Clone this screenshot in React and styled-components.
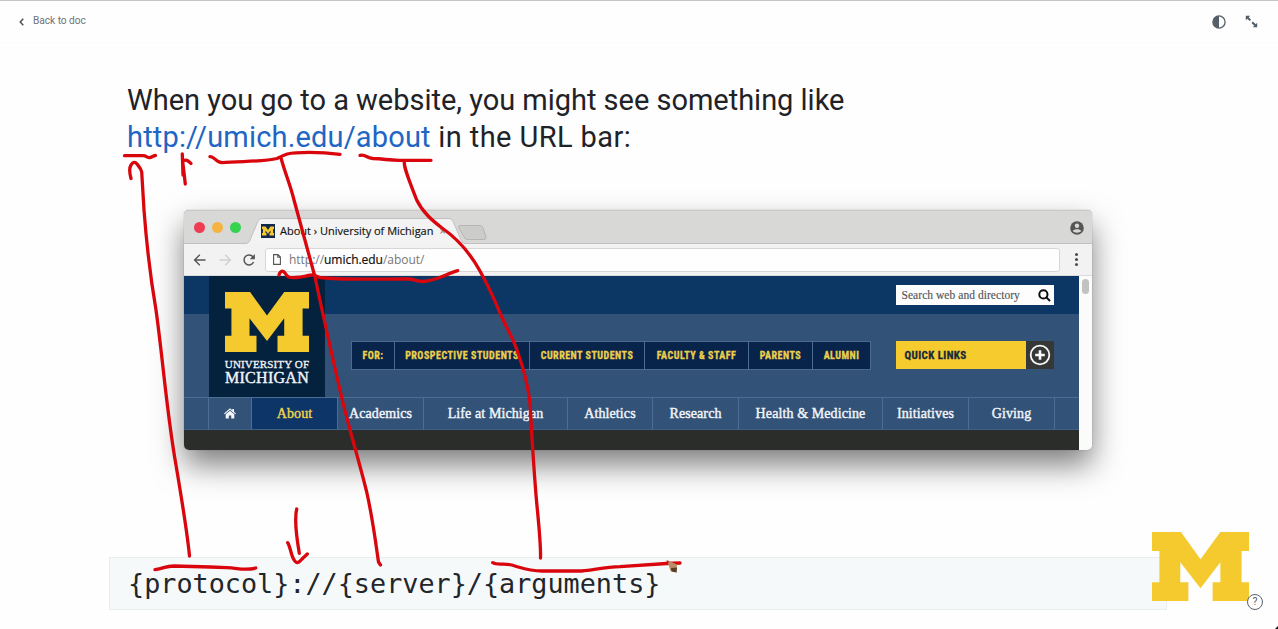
import React from "react";
import styled, { createGlobalStyle } from "styled-components";

const GlobalStyle = createGlobalStyle`
  * { box-sizing: border-box; }
  body { margin: 0; background: #fdfefd; overflow: hidden; }
`;

const Page = styled.div`
  position: relative;
  width: 1278px;
  height: 629px;
  overflow: hidden;
  border-top: 1px solid #c4c4c4;
  background: #fdfefd;
  color: #1f2226;
  font-family: Roboto, "Liberation Sans", sans-serif;
`;

const TopBar = styled.header`
  display: flex;
  justify-content: space-between;
  align-items: center;
  height: 42px;
  padding: 0 20px 0 19px;
  border-bottom: 1px solid #fafbfa;
`;

const BackLink = styled.a`
  display: flex;
  align-items: center;
  gap: 9px;
  padding-bottom: 2px;
  color: #6f7277;
  font-size: 10.2px;
  line-height: 14px;
  letter-spacing: -0.05px;
  svg { margin-top: 3px; }
`;

const Tools = styled.div`
  display: flex;
  align-items: center;
  gap: 19px;
`;

const Slide = styled.main`
  display: flex;
  flex-direction: column;
  padding: 39px 0 0 109px;
`;

const Headline = styled.h1`
  margin: 0 0 55px 18px;
  font-size: 29px;
  font-weight: 400;
  line-height: 36.6px;
`;

const Line = styled.div`
  white-space: nowrap;
  letter-spacing: ${(p) => p.$track}px;
`;

const Url = styled.a`
  color: #1f66c4;
  letter-spacing: ${(p) => p.$track}px;
`;

const Browser = styled.section`
  width: 908px;
  height: 240px;
  margin-left: 75px;
  border-radius: 5px;
  overflow: hidden;
  border-top: 1px solid #c9cac9;
  background: #f0f1f0;
  box-shadow: 0 15px 30px rgba(0, 0, 0, 0.5), 0 0 1px rgba(0, 0, 0, 0.5);
`;

const TabStrip = styled.div`
  display: flex;
  height: 33px;
  border-bottom: 1px solid #bfc0bf;
  background: #d8d9d7;
`;

const Lights = styled.div`
  display: flex;
  gap: 6.8px;
  padding: 11px 0 0 10px;
  width: 62px;
`;

const Light = styled.i`
  flex: none;
  width: 11px;
  height: 11px;
  border-radius: 50%;
  background: ${(p) => p.$color};
`;

const TabArea = styled.div`
  position: relative;
  width: 243px;
  height: 33px;
`;

const TabShape = styled.svg`
  position: absolute;
  inset: 0;
`;

const TabLabel = styled.div`
  position: relative;
  display: flex;
  align-items: center;
  height: 25px;
  margin: 7px 0 0 15px;
  color: #111;
  font: 11px "Open Sans", sans-serif;
  -webkit-text-stroke: 0.15px currentColor;
  white-space: nowrap;
  span { margin-left: 5px; letter-spacing: ${(p) => p.$track}px; }
  em { margin-left: 6px; color: #888; font-style: normal; }
`;

const Profile = styled.div`
  margin: 9px 8px 0 auto;
`;

const Toolbar = styled.div`
  display: flex;
  align-items: center;
  height: 32px;
  padding: 0 14px 0 9px;
  border-bottom: 1px solid #d9dbdc;
  background: #f1f2f1;
`;

const NavIcons = styled.div`
  display: flex;
  gap: 10.5px;
  width: 72px;
`;

const Address = styled.div`
  display: flex;
  align-items: center;
  width: 795px;
  height: 24px;
  padding-left: 7px;
  border: 1px solid #d6d7d6;
  border-radius: 3px;
  background: #fefefe;
  color: #777;
  font: 12px "Open Sans", sans-serif;
  letter-spacing: ${(p) => p.$track}px;
  span { margin-left: 8px; }
  b { color: #111; font-weight: 400; -webkit-text-stroke: 0.2px #111; }
`;

const Dots = styled.div`
  display: flex;
  flex-direction: column;
  gap: 2px;
  margin-left: auto;
  i { width: 3px; height: 3px; border-radius: 50%; background: #4b4b4b; }
`;

const Viewport = styled.div`
  display: flex;
  height: 174px;
`;

const Scrollbar = styled.div`
  width: 13px;
  padding: 3px 0 0 3px;
  background: #fafbfa;
  i { display: block; width: 7px; height: 15px; border-radius: 4px; background: #c1c2c1; }
`;

const Site = styled.div`
  width: 895px;
  background: #2b2d2b;
`;

const SiteHeader = styled.div`
  display: flex;
  height: 121px;
  padding-left: 25px;
  background: linear-gradient(#0c3663 38px, #335277 38px);
`;

const Crest = styled.div`
  display: flex;
  flex-direction: column;
  align-items: center;
  width: 116px;
  padding-top: 16px;
  background: #04223e;
  color: #f4f6f8;
  font-family: "Liberation Serif", serif;
  white-space: nowrap;
`;

const CrestSmall = styled.div`
  margin-top: 7px;
  font-size: 11px;
  line-height: 11px;
  letter-spacing: ${(p) => p.$track}px;
  -webkit-text-stroke: 0.3px currentColor;
`;

const CrestLarge = styled.div`
  font-size: 16px;
  line-height: 15px;
  letter-spacing: ${(p) => p.$track}px;
  -webkit-text-stroke: 0.4px currentColor;
`;

const Audience = styled.ul`
  display: flex;
  height: 29px;
  margin: 65px 25px 0 26px;
  padding: 0;
  border: 1px solid #4a6a90;
  list-style: none;
`;

const AudienceItem = styled.li`
  display: flex;
  align-items: center;
  justify-content: center;
  width: ${(p) => p.$w}px;
  background: #08244a;
  color: #ecd04b;
  font: 700 10px "Liberation Sans Narrow", "Roboto Condensed", Roboto, sans-serif;
  letter-spacing: 0.5px;
  -webkit-text-stroke: 0.3px currentColor;
  white-space: nowrap;
  & + & { border-left: 1px solid #4a6a90; }
`;

const SideTools = styled.div`
  display: flex;
  flex-direction: column;
  width: 158px;
`;

const Search = styled.div`
  display: flex;
  align-items: center;
  justify-content: space-between;
  height: 20px;
  margin-top: 9px;
  padding: 0 3px 0 5.5px;
  background: #fdfdfe;
  color: #555;
  font: 11.5px "Liberation Serif", serif;
  letter-spacing: ${(p) => p.$track}px;
  -webkit-text-stroke: 0.15px currentColor;
  white-space: nowrap;
`;

const QuickLinks = styled.div`
  display: flex;
  align-items: center;
  justify-content: space-between;
  height: 28px;
  margin-top: 36px;
  padding-left: 8.5px;
  background: #f5cb2e;
  color: #17283a;
  font: 700 11px "Liberation Sans Narrow", "Roboto Condensed", Roboto, sans-serif;
  letter-spacing: 0.4px;
  -webkit-text-stroke: 0.3px currentColor;
`;

const Plus = styled.div`
  display: flex;
  align-items: center;
  justify-content: center;
  width: 28px;
  height: 28px;
  background: #363737;
`;

const SiteNav = styled.nav`
  display: flex;
  height: 33px;
  padding-left: 24px;
  border-top: 1px solid #4c6d94;
  border-bottom: 1px solid #3f6088;
  background: #335277;
`;

const NavItem = styled.a`
  display: flex;
  align-items: center;
  justify-content: center;
  width: ${(p) => p.$w}px;
  border-left: 1px solid #4c6d94;
  background: ${(p) => (p.$active ? "#0d3568" : "transparent")};
  color: ${(p) => (p.$active ? "#f0d44a" : "#f3f6fa")};
  font: 14px "Liberation Serif", serif;
  letter-spacing: 0.1px;
  -webkit-text-stroke: 0.4px currentColor;
  white-space: nowrap;
`;

const CodeBox = styled.pre`
  width: 1058px;
  height: 53px;
  margin: 107px 0 0;
  padding: 0 0 0 18px;
  border: 1px solid #ebeeee;
  background: #f6f9f9;
  color: #22262a;
  font: 26.8px/52px "DejaVu Sans Mono", monospace;
`;

const Brand = styled.div`
  position: absolute;
  left: 1152px;
  top: 531px;
`;

const Help = styled.div`
  position: absolute;
  left: 1247px;
  top: 593px;
  display: flex;
  align-items: center;
  justify-content: center;
  width: 16px;
  height: 16px;
  border: 1.4px solid #59606a;
  border-radius: 50%;
  background: #fdfefd;
  color: #59606a;
  font-size: 10.5px;
  line-height: 14px;
`;

const Ink = styled.svg`
  position: absolute;
  left: 0;
  top: -1px;
  pointer-events: none;
`;

const MShape = styled.svg`
  display: block;
`;

const BlockM = ({ width, height, color = "#f4ca2f" }) => (
  <MShape width={width} height={height} viewBox="0 0 288 206" preserveAspectRatio="none">
    <path fill={color} d="M0 0H86L144 81L203 0H288V57H266V150H288V206H180V150H203V90L144 168L84 90V150H108V206H0V150H22V57H0Z" />
  </MShape>
);

const audiences = [
  ["FOR:", 42], ["PROSPECTIVE STUDENTS", 135], ["CURRENT STUDENTS", 115],
  ["FACULTY & STAFF", 104], ["PARENTS", 64], ["ALUMNI", 58],
];

const sections = [
  ["About", 86], ["Academics", 86], ["Life at Michigan", 144], ["Athletics", 85],
  ["Research", 86], ["Health & Medicine", 144], ["Initiatives", 86], ["Giving", 86],
];

const strokes = [
  "M124.5 155.7H143C147 155.7 147 158 150 157.5S153 155.5 155.5 155.5",
  "M131 178.5C129.5 173 129 168 131 165C133 162 135 161.5 137 164C139 167 141 168 141.7 172L144 210C147 250 150 275 156 310C163 360 167 415 176 465C181 495 187 530 189.5 556",
  "M182.3 154L183 175M182.5 160L185.3 184M183 161C187 159 188 161 191 163.5",
  "M210 156.7C214 156 216 162.5 222 162.7C240 161 263 162 277 158.5C286 154 289 153 296 152.8C312 152 325 152.5 340 154.3",
  "M281 158C286 176 290 184 294 200L315 277C323 315 333 360 343 403C351 435 359 461 366.7 492C373 520 376 545 378.5 562L380.5 565",
  "M360 155.3C366 154 366 158 373 158.5C385 159 390 160.5 400 160.3H431",
  "M404.5 161C403 166 409 180 416.7 200C423 213 433 221 442 228C458 239 470 253 480 271C486 282 494 298 500 313C507 329 514 340 518 353C524 370 528 385 530 403C532 440 534 470 536 495C538 518 541 542 540.5 558",
  "M279 275C280 271 283 270 285 273C287 277 289 278 296 277.5S309 275 313 275S316 278 325 278C350 280 380 279 408 279C415 279 415 281.5 423 281.5C436 281 446 274 457.7 270.7",
  "M296.7 509C294 520 297 540 299.3 553.3M287.7 542.7C290 546 291 554 293 558C296 564 298 564 302 559L307.3 554",
  "M155 569.7C165 568 165 566 174 566L210 567L226.7 567.7C238 568 245 571 255.7 568",
  "M492.7 562.7C498 566 505 562 515 566C525 569 530 571 542 571H581.7C594 570 605 567 620 566.7L666.7 563.5L680 563",
];

export default function App() {
  return (
    <>
      <GlobalStyle />
      <Page>
        <TopBar>
          <BackLink>
            <svg width="5" height="8" viewBox="0 0 5 8" fill="none" stroke="#4a4d52" strokeWidth="1.4">
              <path d="M4.3 .7L1.2 4L4.3 7.3" />
            </svg>
            <span>Back to doc</span>
          </BackLink>
          <Tools>
            <svg width="14" height="14" viewBox="0 0 14 14">
              <circle cx="7" cy="7" r="6.1" fill="none" stroke="#555e69" strokeWidth="1.3" />
              <path d="M7 1A6 6 0 0 0 7 13Z" fill="#555e69" />
            </svg>
            <svg width="13" height="13" viewBox="0 0 13 13" fill="#555e69" stroke="#555e69">
              <path d="M.8 .8H5.2L.8 5.2Z M12.2 12.2H7.8L12.2 7.8Z" stroke="none" />
              <path d="M2 2L5.4 5.4M7.2 7.2L10.8 10.8" strokeWidth="2" />
            </svg>
          </Tools>
        </TopBar>

        <Slide>
          <Headline>
            <Line $track={-0.02}>When you go to a website, you might see something like</Line>
            <Line $track={0.4}>
              <Url $track={0.17}>http://umich.edu/about</Url> in the URL bar:
            </Line>
          </Headline>

          <Browser>
            <TabStrip>
              <Lights>
                <Light $color="#f03c52" />
                <Light $color="#f5b342" />
                <Light $color="#35d350" />
              </Lights>
              <TabArea>
                <TabShape width="243" height="33" viewBox="0 0 243 33">
                  <path d="M0 32.5C3 32 3 31 4 29L12 10Q13 7.500 16 7.500H203Q206 7.500 207 10L215 29Q216 32.500 219 32.500V33.500H0Z" fill="#f2f3f2" stroke="#bfc0bf" />
                  <path d="M214 14.500H234Q236 14.500 237 17L240 26Q240.500 28.500 238 28.500H221Q219 28.500 218 26L213 17Q212 14.500 214 14.500Z" fill="#cccdcb" stroke="#b5b6b4" />
                </TabShape>
                <TabLabel $track={0}>
                  <svg width="14" height="14" viewBox="0 0 14 14">
                    <path fill="#12294d" d="M0 0H14V14H0Z" />
                    <path fill="#f4ca2f" transform="translate(1 2.5) scale(.0417 .0437)" d="M0 0H86L144 81L203 0H288V57H266V150H288V206H180V150H203V90L144 168L84 90V150H108V206H0V150H22V57H0Z" />
                  </svg>
                  <span>About › University of Michigan</span>
                  <em>×</em>
                </TabLabel>
              </TabArea>
              <Profile>
                <svg width="14" height="14" viewBox="0 0 14 14">
                  <circle cx="7" cy="7" r="6.800" fill="#555655" />
                  <circle cx="7" cy="4.800" r="2.200" fill="#d8d9d7" />
                  <path d="M2.800 10C4 7.700 10 7.700 11.200 10C9.500 12.300 4.500 12.300 2.800 10Z" fill="#d8d9d7" />
                </svg>
              </Profile>
            </TabStrip>
            <Toolbar>
              <NavIcons>
                <svg width="14" height="14" viewBox="0 0 14 14" fill="none" stroke="#555" strokeWidth="1.4">
                  <path d="M12.500 7H2M6.800 1.800L1.600 7L6.800 12.200" />
                </svg>
                <svg width="14" height="14" viewBox="0 0 14 14" fill="none" stroke="#cfd0cf" strokeWidth="1.4">
                  <path d="M1.500 7H12M7.200 1.800L12.400 7L7.200 12.200" />
                </svg>
                <svg width="14" height="14" viewBox="0 0 14 14" fill="none" stroke="#555" strokeWidth="1.5">
                  <path d="M11.600 9A5 5 0 1 1 11 3.800L12 5" />
                  <path d="M12.900 1V6.200H7.700Z" fill="#555" stroke="none" />
                </svg>
              </NavIcons>
              <Address $track={-0.03}>
                <svg width="8" height="11" viewBox="0 0 8 11" fill="none" stroke="#555" strokeWidth="1.100">
                  <path d="M.6 .6H5L7.400 3V10.400H.6ZM4.800 .8V3.300H7.200" />
                </svg>
                <span>http://<b>umich.edu</b>/about/</span>
              </Address>
              <Dots><i /><i /><i /></Dots>
            </Toolbar>

            <Viewport>
              <Site>
                <SiteHeader>
                  <Crest>
                    <BlockM width={84} height={60} />
                    <CrestSmall $track={0.15}>UNIVERSITY OF</CrestSmall>
                    <CrestLarge $track={0.3}>MICHIGAN</CrestLarge>
                  </Crest>
                  <Audience>
                    {audiences.map(([name, w]) => <AudienceItem key={name} $w={w}>{name}</AudienceItem>)}
                  </Audience>
                  <SideTools>
                    <Search $track={0.05}>
                      Search web and directory
                      <svg width="13" height="13" viewBox="0 0 13 13" fill="none" stroke="#0c0d10" strokeWidth="2">
                        <circle cx="5.400" cy="5.400" r="4.100" />
                        <path d="M8.400 8.400L12 12" />
                      </svg>
                    </Search>
                    <QuickLinks>
                      QUICK LINKS
                      <Plus>
                        <svg width="22" height="22" viewBox="0 0 22 22" fill="none" stroke="#fafafa">
                          <circle cx="11" cy="11" r="9.300" strokeWidth="1.800" />
                          <path d="M11 6.200V15.800M6.200 11H15.800" strokeWidth="2.600" />
                        </svg>
                      </Plus>
                    </QuickLinks>
                  </SideTools>
                </SiteHeader>
                <SiteNav>
                  <NavItem $w={43}>
                    <svg width="12" height="11" viewBox="0 0 12 11" fill="#f5f7fa" stroke="none">
                      <path d="M6 .3L8.300 2.300V1H10V3.800L12 5.500L11.300 6.300L6 1.800L.7 6.300L0 5.500Z" />
                      <path d="M6 2.700L10.300 6.300V10.500H7.200V7.500H4.800V10.500H1.700V6.300Z" />
                    </svg>
                  </NavItem>
                  {sections.map(([name, w], i) => (
                    <NavItem key={name} $w={w} $active={i === 0}>{name}</NavItem>
                  ))}
                  <NavItem $w={24} />
                </SiteNav>
              </Site>
              <Scrollbar><i /></Scrollbar>
            </Viewport>
          </Browser>

          <CodeBox>{"{protocol}://{server}/{arguments}"}</CodeBox>
        </Slide>

        <Brand><BlockM width={97} height={69} /></Brand>
        <Help>?</Help>

        <Ink width="1278" height="629" viewBox="0 0 1278 629" fill="none">
          <g stroke="#d9060e" strokeWidth="3.3" strokeLinecap="round" strokeLinejoin="round">
            {strokes.map((d) => <path key={d} d={d} />)}
          </g>
          <path d="M667 560L677 564.500L676.500 572.500L670.500 571Z" fill="#b98f68" />
          <path d="M671 568L677 567.500L676.500 572.500L671.500 571.500Z" fill="#5d3d29" />
          <path d="M666 560.500L669 561.500L668 563.500Z" fill="#c20d10" />
          <path d="M1278 626V629H1275Z" fill="#111" />
        </Ink>
      </Page>
    </>
  );
}
